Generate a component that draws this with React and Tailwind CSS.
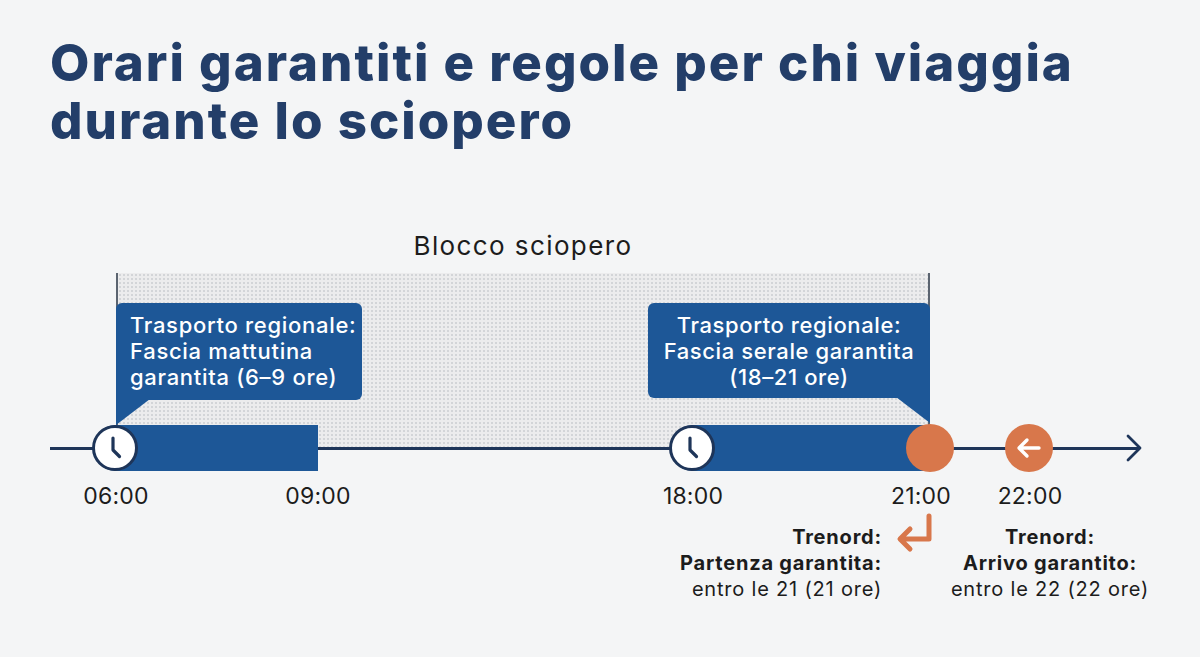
import React from 'react';

const NAVY = '#1e3559';

const Clock = ({ left }) => (
  <div className={`absolute top-[195px] flex h-[46px] w-[46px] items-center justify-center rounded-full border-[3px] border-[#1e3559] bg-white ${left}`}>
    <svg width="32" height="32" viewBox="0 0 32 32" fill="none">
      <path d="M14 6 L14 18 L20.5 24.5" stroke={NAVY} strokeWidth="3.2" strokeLinecap="round" strokeLinejoin="round" />
    </svg>
  </div>
);

const TimeLabel = ({ center, children }) => (
  <div className={`absolute top-[251px] w-[100px] -translate-x-1/2 text-center text-[23px] leading-[30px] tracking-[0.2px] text-[#1c1c1c] ${center}`}>
    {children}
  </div>
);

const App = () => {
  return (
    <div className="relative h-[657px] w-[1200px] overflow-hidden bg-[#f4f5f6] font-['Inter','Noto_Sans',sans-serif]">
      <h1 className="pl-[50px] pt-[34px] text-[51px] font-extrabold leading-[58px] tracking-[2px] text-[#233e69]">
        Orari garantiti e regole per chi viaggia
        <br />
        durante lo sciopero
      </h1>

      {/* timeline diagram */}
      <div className="absolute left-0 top-[230px] h-[427px] w-[1200px]">
        <div className="absolute left-[116px] top-0 w-[814px] text-center text-[26px] leading-[32px] tracking-[1.4px] text-[#1c1c1c]">
          Blocco sciopero
        </div>

        {/* strike block */}
        <div className="absolute left-[116px] top-[43px] h-[175px] w-[814px] border-x-2 border-[#5b6470] bg-[#ececed] bg-[radial-gradient(#d3d5d8_0.9px,transparent_1px)] bg-[length:4px_4px]" />

        {/* morning callout */}
        <div className="absolute left-[116px] top-[73px] h-[97px] w-[246px] rounded-md rounded-bl-none bg-[#1d5797] pl-[14px] pt-[9px] text-[22px] font-medium leading-[26px] tracking-[0.7px] text-white">
          Trasporto regionale:
          <br />
          Fascia mattutina
          <br />
          garantita (6–9 ore)
        </div>
        <svg className="absolute left-[116px] top-[169px]" width="36" height="28" viewBox="0 0 36 28">
          <polygon points="0,0 34,0 0,26" fill="#1d5797" />
        </svg>

        {/* evening callout */}
        <div className="absolute left-[648px] top-[73px] h-[95px] w-[282px] rounded-md rounded-br-none bg-[#1d5797] pt-[9px] text-center text-[22px] font-medium leading-[26px] tracking-[0.6px] text-white">
          Trasporto regionale:
          <br />
          Fascia serale garantita
          <br />
          (18–21 ore)
        </div>
        <svg className="absolute left-[894px] top-[167px]" width="36" height="28" viewBox="0 0 36 28">
          <polygon points="2,0 36,0 36,26" fill="#1d5797" />
        </svg>

        {/* axis */}
        <div className="absolute left-[50px] top-[217px] h-[2.5px] w-[1090px] bg-[#1e3559]" />
        <svg className="absolute left-[1124px] top-[204px]" width="20" height="28" viewBox="0 0 20 28">
          <path d="M4 2 L16 14 L4 26" stroke={NAVY} strokeWidth="2.8" fill="none" strokeLinecap="round" strokeLinejoin="round" />
        </svg>

        {/* bars */}
        <div className="absolute left-[93px] top-[195px] h-[46px] w-[225px] rounded-l-full bg-[#1d5797]" />
        <div className="absolute left-[670px] top-[195px] h-[46px] w-[260px] rounded-l-full bg-[#1d5797]" />
        <Clock left="left-[92px]" />
        <Clock left="left-[669px]" />

        {/* orange markers */}
        <div className="absolute left-[906px] top-[194px] h-[48px] w-[48px] rounded-full bg-[#d8774b]" />
        <div className="absolute left-[1005px] top-[194px] flex h-[48px] w-[48px] items-center justify-center rounded-full bg-[#d8774b]">
          <svg width="28" height="24" viewBox="0 0 28 24" fill="none">
            <path d="M24 12 H5 M12 4 L4 12 L12 20" stroke="#fff" strokeWidth="3.4" strokeLinecap="round" strokeLinejoin="round" />
          </svg>
        </div>

        <TimeLabel center="left-[116px]">06:00</TimeLabel>
        <TimeLabel center="left-[318px]">09:00</TimeLabel>
        <TimeLabel center="left-[693px]">18:00</TimeLabel>
        <TimeLabel center="left-[921px]">21:00</TimeLabel>
        <TimeLabel center="left-[1030px]">22:00</TimeLabel>

        {/* departure note */}
        <div className="absolute left-[560px] top-[294px] flex w-[322px] flex-col items-end text-[20px] leading-[26px] tracking-[0.8px] text-[#1c1c1c]">
          <div className="font-bold">Trenord:</div>
          <div className="font-bold">Partenza garantita:</div>
          <div>entro le 21 (21 ore)</div>
        </div>
        <svg className="absolute left-[892px] top-[283px]" width="44" height="40" viewBox="0 0 44 40">
          <path d="M37 3 V26 H9 M18 16 L8 26 L18 36" stroke="#d8774b" strokeWidth="5" fill="none" strokeLinecap="round" strokeLinejoin="round" />
        </svg>

        {/* arrival note */}
        <div className="absolute left-[930px] top-[294px] flex w-[240px] flex-col items-center text-[20px] leading-[26px] tracking-[0.8px] text-[#1c1c1c]">
          <div className="font-bold">Trenord:</div>
          <div className="font-bold">Arrivo garantito:</div>
          <div>entro le 22 (22 ore)</div>
        </div>
      </div>
    </div>
  );
};

export default App;
